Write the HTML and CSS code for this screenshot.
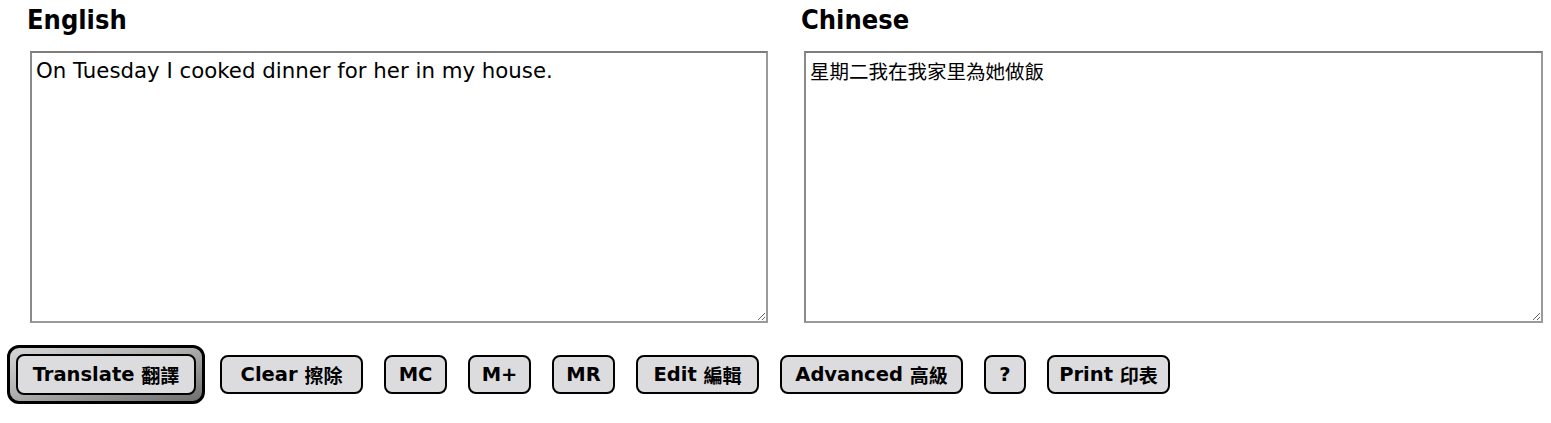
FILE: index.html
```html
<!DOCTYPE html>
<html>
<head>
<meta charset="utf-8">
<link rel="stylesheet" href="styles.css">
</head>
<body>
<div class="page">
  <div class="panes">
    <div class="pane">
      <h2 class="title">English</h2>
      <textarea class="box box-en">On Tuesday I cooked dinner for her in my house.</textarea>
    </div>
    <div class="pane">
      <h2 class="title">Chinese</h2>
      <textarea class="box box-zh">星期二我在我家里為她做飯</textarea>
    </div>
  </div>
  <div class="actions">
    <div class="focus-ring">
      <button class="btn btn-translate">Translate <span class="cjk">翻譯</span></button>
    </div>
    <button class="btn btn-clear">Clear <span class="cjk">擦除</span></button>
    <button class="btn btn-mem">MC</button>
    <button class="btn btn-mem">M+</button>
    <button class="btn btn-mem">MR</button>
    <button class="btn btn-edit">Edit <span class="cjk">編輯</span></button>
    <button class="btn btn-adv">Advanced <span class="cjk">高級</span></button>
    <button class="btn btn-help">?</button>
    <button class="btn btn-print">Print <span class="cjk">印表</span></button>
  </div>
</div>
</body>
</html>
```

FILE: styles.css
```css
html, body {
  margin: 0;
  padding: 0;
  background: #ffffff;
}

.page {
  font-family: "DejaVu Sans", "Noto Sans CJK TC", sans-serif;
  color: #000;
}

.panes {
  display: grid;
  grid-template-columns: 738px 739px;
  column-gap: 36px;
  padding-left: 30px;
}

.pane {
  display: flex;
  flex-direction: column;
}

.title {
  margin: 4px 0 15px -3px;
  font-family: "DejaVu Sans Condensed", "DejaVu Sans", sans-serif;
  font-weight: bold;
  font-size: 27px;
  line-height: 32px;
}

.box {
  box-sizing: border-box;
  width: 100%;
  height: 272px;
  margin: 0;
  padding: 5px 4px;
  border: 2px solid #9a9a9a;
  border-top-color: #7c7c7c;
  border-left-color: #8a8a8a;
  border-radius: 0;
  background: #fff;
  color: #000;
  line-height: 26px;
  resize: both;
  outline: none;
}

.box-en {
  font-family: "DejaVu Sans", sans-serif;
  font-size: 21.3px;
}

.box-zh {
  font-family: "Noto Sans CJK TC", sans-serif;
  font-size: 19.5px;
}

.actions {
  display: flex;
  align-items: center;
  gap: 21px;
  padding: 22px 0 0 7px;
}

.focus-ring {
  display: flex;
  padding: 6px;
  border: 3px solid #000;
  border-radius: 12px;
  background: linear-gradient(165deg, #d6d6d6 0%, #b0b0b0 45%, #6e6e6e 100%);
  margin-right: -6px;
}

.btn {
  box-sizing: border-box;
  height: 39px;
  display: inline-flex;
  align-items: center;
  justify-content: center;
  padding: 0;
  border: 2px solid #000;
  border-radius: 8px;
  background: #dcdcdf;
  color: #000;
  font-family: "DejaVu Sans", "Noto Sans CJK TC", sans-serif;
  font-weight: bold;
  font-size: 19.5px;
  white-space: pre;
}

.btn-translate {
  width: 180px;
  height: 41px;
}

.btn-clear { width: 143px; }
.btn-mem { width: 63px; }
.btn-edit { width: 123px; }
.btn-adv { width: 183px; }
.btn-help { width: 42px; }
.btn-print { width: 123px; }

.cjk {
  font-family: "Noto Sans CJK TC", sans-serif;
  font-weight: bold;
  font-size: 19px;
}
```
